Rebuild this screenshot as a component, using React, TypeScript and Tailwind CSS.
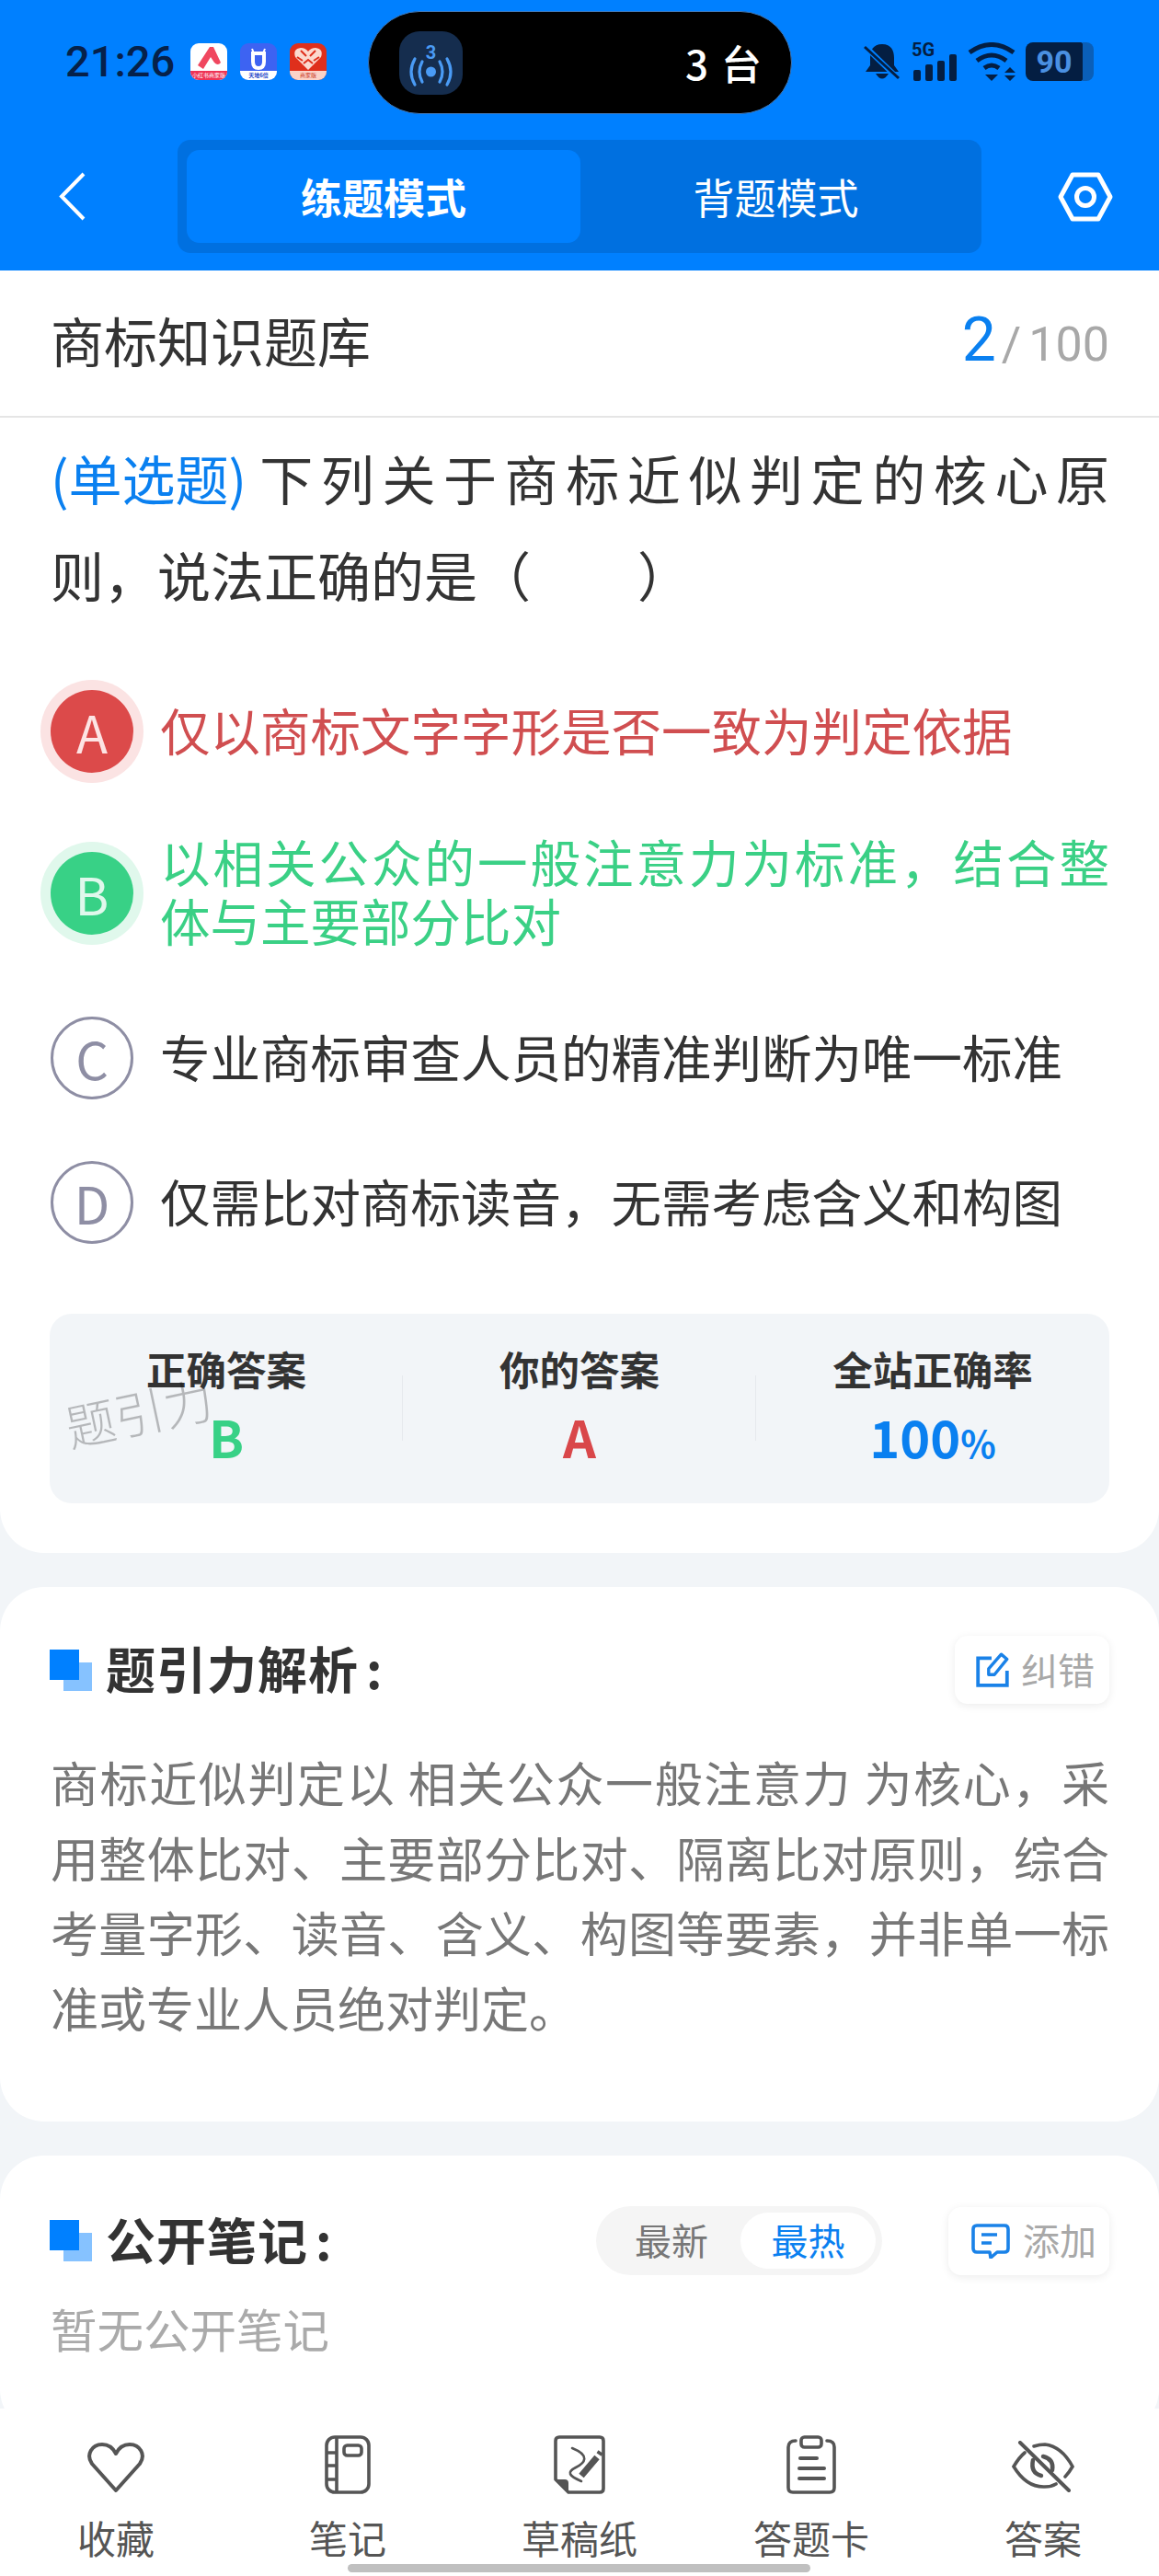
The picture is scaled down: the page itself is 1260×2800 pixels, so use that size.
import type { ReactNode } from 'react';

// Small square notification icon from the status bar
function AppBadge({ children, label, bg, labelClass }: { children: ReactNode; label: string; bg: string; labelClass: string }) {
  return (
    <div className={`relative w-[40px] h-[40px] rounded-[9px] overflow-hidden ${bg}`}>
      {children}
      <div className={`absolute bottom-0 inset-x-0 h-[10px] leading-[10px] text-[6px] text-center whitespace-nowrap ${labelClass}`}>{label}</div>
    </div>
  );
}

function StatusBar() {
  return (
    <div className="flex items-start h-[138px] pt-[12px]">
      <div className="flex items-center h-[112px] pl-[71px] w-[400px]">
        <span className="text-[47px] font-medium text-[#06214a] w-[136px] font-['Roboto',sans-serif] -mt-[2px]">21:26</span>
        <div className="flex gap-[14px] -mt-[2px]">
          <AppBadge label="小红书商家版" bg="bg-white" labelClass="bg-[#ee3355] text-white">
            <svg viewBox="0 0 40 40" className="w-[40px] h-[40px]">
              <path d="M8 24 L21 4 L25 4 L33 21 Q30 25 26 21 L22 15 L14 28 Z" fill="#f0475f" />
            </svg>
          </AppBadge>
          <AppBadge label="天地6倍" bg="bg-[#3d63f2]" labelClass="bg-white text-[#2747c8] font-bold">
            <svg viewBox="0 0 40 40" className="w-[40px] h-[40px]">
              <path d="M13 6 L15 11 H25 L27 6" stroke="#fff" strokeWidth="2" fill="none" />
              <path d="M14 11 H26 V20 Q26 27 20 27 Q14 27 14 20 Z" stroke="#fff" strokeWidth="4" fill="none" />
            </svg>
          </AppBadge>
          <AppBadge label="商家版" bg="bg-[#df2f1c]" labelClass="bg-[#fbd3c8] text-[#c9331e]">
            <svg viewBox="0 0 40 40" className="w-[40px] h-[40px]">
              <path d="M20 29 L6 15 Q3 6 12 5 Q17 5 20 9 Q23 5 28 5 Q37 6 34 15 Z" fill="#fbd9cf" />
              <path d="M12 8 L18 14 M28 8 L22 14 M8 15 L14 19 M32 15 L26 19 M15 22 L20 18 L25 22" stroke="#df2f1c" strokeWidth="2" fill="none" />
            </svg>
          </AppBadge>
        </div>
      </div>

      <div className="flex items-center w-[461px] h-[112px] rounded-full bg-black border border-[#3f78b8] pl-[33px] pr-[30px] justify-between">
        <div className="w-[69px] h-[69px] rounded-[22px] bg-[#152d4e] flex items-center justify-center">
          <svg viewBox="0 0 69 69" className="w-[69px] h-[69px]">
            <text x="34.5" y="30" textAnchor="middle" fontSize="20" fontWeight="700" fill="#4a9bf5" fontFamily="Roboto, sans-serif">3</text>
            <circle cx="34.5" cy="44" r="5.5" fill="#4a9bf5" />
            <g fill="none" stroke="#4a9bf5" strokeWidth="3.2" strokeLinecap="round">
              <path d="M25 33 Q19 44 25 55" />
              <path d="M44 33 Q50 44 44 55" />
              <path d="M17 30 Q9 44 17 58" />
              <path d="M52 30 Q60 44 52 58" />
            </g>
          </svg>
        </div>
        <span className="text-[44px] font-medium text-white tracking-[2px]">3 台</span>
      </div>

      <div className="flex items-center h-[112px] pl-[78px] -mt-[1px]">
        <svg viewBox="0 0 40 42" className="w-[40px] h-[42px]">
          <path d="M20 2 C10 2 7 9 7 17 V25 L2 32 H38 L33 25 V17 C33 9 30 2 20 2 Z" fill="#041e42" />
          <path d="M13 34 Q20 45 27 34 Z" fill="#041e42" />
          <path d="M2 5 L38 40" stroke="#0080ff" strokeWidth="6" />
          <path d="M1 5 L38 39" stroke="#041e42" strokeWidth="3" />
        </svg>
        <div className="relative w-[50px] h-[42px] ml-[12px]">
          <span className="absolute left-0 -top-[6px] text-[20px] leading-[28px] font-bold text-[#041e42] font-['Roboto',sans-serif]">5G</span>
          <div className="absolute bottom-0 left-[2px] flex items-end gap-[5px]">
            <div className="w-[8px] h-[12px] rounded-[2px] bg-[#041e42]" />
            <div className="w-[8px] h-[18px] rounded-[2px] bg-[#041e42]" />
            <div className="w-[8px] h-[22px] rounded-[2px] bg-[#041e42]" />
            <div className="w-[8px] h-[29px] rounded-[2px] bg-[#041e42]" />
          </div>
        </div>
        <svg viewBox="0 0 54 42" className="w-[54px] h-[42px] ml-[11px]">
          <g fill="none" stroke="#041e42" strokeWidth="5">
            <path d="M2 11 Q26 -6 50 11" />
            <path d="M10 20 Q26 8 42 20" />
            <path d="M18 28 Q26 22 34 28" />
          </g>
          <path d="M19 35 H33 L26 42 Z" fill="#041e42" />
          <path d="M40 33 L46 27 L52 33 Z M40 36 H52 L46 42 Z" fill="#041e42" />
        </svg>
        <div className="flex items-center ml-[9px]">
          <div className="w-[62px] h-[42px] rounded-l-[8px] rounded-r-[2px] bg-[#041e42] flex items-center justify-center text-[34px] font-bold text-[#4a90e2] font-['Roboto',sans-serif] leading-none">90</div>
          <div className="w-[12px] h-[42px] bg-[#0a5fb8] rounded-r-[8px]" />
        </div>
      </div>
    </div>
  );
}

function Header() {
  return (
    <header className="h-[294px] bg-[#0080ff] shrink-0">
      <StatusBar />
      <div className="flex items-center h-[123px] mt-[14px]">
        <div className="w-[193px] pl-[64px]">
          <svg viewBox="0 0 29 53" className="w-[29px] h-[53px]">
            <path d="M27 2 L3 26.5 L27 51" fill="none" stroke="#fff" strokeWidth="4" />
          </svg>
        </div>
        <div className="flex w-[874px] h-[123px] rounded-[14px] bg-[#0070e0] p-[11px]">
          <div className="w-[428px] rounded-[14px] bg-[#0080ff] flex items-center justify-center text-[45px] font-bold text-white -ml-px">练题模式</div>
          <div className="flex-1 flex items-center justify-center text-[45px] text-white">背题模式</div>
        </div>
        <div className="pl-[83px]">
          <svg viewBox="0 0 60 54" className="w-[60px] h-[54px]">
            <path d="M16 3 H44 L57 27 L44 51 H16 L3 27 Z" fill="none" stroke="#fff" strokeWidth="5" strokeLinejoin="round" />
            <circle cx="30" cy="27" r="9.5" fill="none" stroke="#fff" strokeWidth="5" />
          </svg>
        </div>
      </div>
    </header>
  );
}

type OptionState = 'wrong' | 'right' | 'idle';

function OptionRow({ letter, text, state, className }: { letter: string; text: string; state: OptionState; className: string }) {
  const circle =
    state === 'wrong'
      ? 'bg-[#dc4a4a] ring-[11px] ring-[#fbe3e3] text-[#fde4e4]'
      : state === 'right'
        ? 'bg-[#38d186] ring-[11px] ring-[#e0f8ec] text-[#e0f8ec]'
        : 'border-[3px] border-[#8e8ea4] text-[#8e8ea4]';
  const label = state === 'wrong' ? 'text-[#d04e50]' : state === 'right' ? 'text-[#3ad085]' : 'text-[#333333]';

  return (
    <div className={`flex items-center ${className}`}>
      <div className={`w-[90px] h-[90px] shrink-0 ml-[1px] mr-[29px] rounded-full flex items-center justify-center text-[56px] font-normal ${circle}`}>
        {letter}
      </div>
      <p className={`flex-1 text-[54.5px] leading-[64px] text-justify pb-[5px] ${label}`}>{text}</p>
    </div>
  );
}

function SectionIcon() {
  return (
    <div className="relative w-[46px] h-[45px] shrink-0">
      <div className="absolute right-0 bottom-0 w-[31px] h-[31px] bg-[#86c2ff]" />
      <div className="absolute left-0 top-0 w-[32px] h-[33px] bg-[#0080ff]" />
    </div>
  );
}

function Stat({ label, children, divider }: { label: string; children: ReactNode; divider?: boolean }) {
  return (
    <div className="relative flex-1 flex flex-col items-center">
      {divider && <div className="absolute -left-px top-[67px] h-[71px] w-px bg-[#e6e9ed]" />}
      <div className="mt-[35px] text-[43.5px] leading-[50px] font-bold text-[#333333]">{label}</div>
      <div className="mt-[16px] text-[56px] leading-[64px] font-bold">{children}</div>
    </div>
  );
}

function NavItem({ label, children }: { label: string; children: ReactNode }) {
  return (
    <div className="flex flex-col items-center">
      <div className="h-[64px] flex items-center justify-center">{children}</div>
      <div className="mt-[22px] text-[42px] leading-[50px] text-[#555555]">{label}</div>
    </div>
  );
}

function BottomNav() {
  return (
    <nav className="relative h-[182px] shrink-0 bg-white pt-[29px] grid grid-cols-5">
      <NavItem label="收藏">
        <svg viewBox="0 0 64 56" className="w-[64px] h-[56px] mt-[6px]">
          <path d="M32 53 L6 24 C-1 14 6 3 17 3 C24 3 29 7 32 13 C35 7 40 3 47 3 C58 3 65 14 58 24 Z" fill="none" stroke="#555" strokeWidth="4" strokeLinejoin="round" />
        </svg>
      </NavItem>
      <NavItem label="笔记">
        <svg viewBox="0 0 50 64" className="w-[50px] h-[64px]">
          <g fill="none" stroke="#555" strokeWidth="3.6">
            <rect x="2" y="2" width="46" height="60" rx="9" />
            <path d="M13 2 V62 M2 19 H13 M2 33 H13 M2 48 H13" />
            <rect x="21" y="11" width="19" height="11" rx="3.5" />
          </g>
        </svg>
      </NavItem>
      <NavItem label="草稿纸">
        <svg viewBox="0 0 56 64" className="w-[56px] h-[64px]">
          <path d="M16 62 H50 Q54 62 54 58 V6 Q54 2 50 2 H6 Q2 2 2 6 V48 Z" fill="none" stroke="#555" strokeWidth="3.6" strokeLinejoin="round" />
          <path d="M2 48 H12 Q16 48 16 52 V62 Z" fill="#555" />
          <path d="M20 14 C40 22 34 30 24 35 C14 40 16 44 30 50" fill="none" stroke="#555" strokeWidth="2.6" strokeLinecap="round" />
          <path d="M30 44 L47 24" stroke="#555" strokeWidth="7" />
          <path d="M49 21 L51 18" stroke="#555" strokeWidth="6" />
        </svg>
      </NavItem>
      <NavItem label="答题卡">
        <svg viewBox="0 0 54 64" className="w-[54px] h-[64px]">
          <g fill="none" stroke="#555" strokeWidth="3.6" strokeLinecap="round">
            <path d="M10 6 Q2 6 2 13 V57 Q2 62 7 62 H47 Q52 62 52 57 V13 Q52 6 44 6" />
            <rect x="16" y="2" width="22" height="11" rx="3.5" />
            <path d="M15 25 H33" strokeWidth="4" />
            <path d="M14 36 H41" strokeWidth="4" />
            <path d="M14 47 H41" strokeWidth="4" />
          </g>
        </svg>
      </NavItem>
      <NavItem label="答案">
        <svg viewBox="0 0 68 56" className="w-[68px] h-[56px] mt-[3px]">
          <g fill="none" stroke="#555" strokeWidth="3.6" strokeLinecap="round">
            <path d="M14 13 Q8 18 2 28 Q16 51 36 50 Q43 50 48 47" />
            <path d="M24 6 Q30 4 36 4 Q54 6 66 28 Q62 35 58 39" />
            <path d="M23 21 Q20 35 32 38" strokeWidth="4.5" />
            <path d="M34 17 Q46 20 44 32" strokeWidth="4.5" />
            <path d="M9 2 L62 54" strokeWidth="4" />
          </g>
        </svg>
      </NavItem>
      <div className="absolute left-[378px] bottom-[4px] w-[503px] h-[9px] rounded-full bg-[#c0c0c0]" />
    </nav>
  );
}

export default function App() {
  return (
    <div className="w-[1260px] h-[2800px] overflow-hidden flex flex-col bg-[#f2f5f8] font-['Noto_Sans_CJK_SC','Noto_Sans',sans-serif]">
      <Header />

      <main className="flex-1 overflow-hidden">
        {/* Question card */}
        <section className="bg-white rounded-b-[48px] pb-[54px]">
          <div className="h-[160px] px-[54px] flex items-center justify-between border-b-2 border-[#e5e5e5]">
            <span className="ml-px mb-[7px] text-[58px] text-[#333333]">商标知识题库</span>
            <span className="flex items-baseline mb-[7px] font-['Roboto',sans-serif]">
              <span className="text-[66px] text-[#0a80f0]">2</span>
              <span className="text-[52px] text-[#a8a8a8] ml-[6px]">/</span>
              <span className="text-[52px] text-[#a8a8a8] ml-[8px]">100</span>
            </span>
          </div>

          <div className="px-[54px] pt-[13px]">
            {/* First line stretches to the right edge, the blue tag keeps its natural spacing */}
            <div className="flex gap-[14px] text-[58px] leading-[105px] text-[#333333] ml-px">
              <span className="shrink-0 text-[#0a80f0]">(单选题)</span>
              <span className="flex-1 text-justify [text-align-last:justify]">下列关于商标近似判定的核心原</span>
            </div>
            <p className="text-[58px] leading-[105px] text-[#333333] ml-px">则，说法正确的是（　　）</p>

            <OptionRow className="mt-[73px]" letter="A" state="wrong" text="仅以商标文字字形是否一致为判定依据" />
            <OptionRow className="mt-[64px]" letter="B" state="right" text="以相关公众的一般注意力为标准，结合整体与主要部分比对" />
            <OptionRow className="mt-[68px]" letter="C" state="idle" text="专业商标审查人员的精准判断为唯一标准" />
            <OptionRow className="mt-[67px]" letter="D" state="idle" text="仅需比对商标读音，无需考虑含义和构图" />

            <div className="relative mt-[76px] h-[206px] rounded-[24px] bg-[#f2f5f8] flex">
              <Stat label="正确答案">
                <span className="text-[#38d186]">B</span>
              </Stat>
              <Stat label="你的答案" divider>
                <span className="text-[#d9474a]">A</span>
              </Stat>
              <Stat label="全站正确率" divider>
                <span className="text-[#0a80f0]">
                  100<span className="text-[40px]">%</span>
                </span>
              </Stat>
              {/* Watermark */}
              <div className="absolute left-[16px] top-[76px] -rotate-[12deg] text-[54px] leading-[60px] font-light text-black/25 whitespace-nowrap">题引力</div>
            </div>
          </div>
        </section>

        {/* Analysis card */}
        <section className="mt-[37px] bg-white rounded-[48px] px-[54px] pt-[53px] pb-[82px]">
          <div className="flex items-center justify-between h-[74px]">
            <div className="flex items-center gap-[15px]">
              <SectionIcon />
              <span className="mb-[5px] text-[54px] font-bold text-[#333333] tracking-[1px]">
                题引力解析<span className="ml-[8px]">:</span>
              </span>
            </div>
            <div className="flex items-center w-[168px] h-[74px] rounded-[14px] bg-white shadow-[0_2px_10px_rgba(0,0,0,0.08)] pl-[22px]">
              <svg viewBox="0 0 36 38" className="w-[38px] h-[40px]">
                <path d="M17 7 H3 V35 H33 V20" fill="none" stroke="#1a82e8" strokeWidth="3.6" />
                <path d="M14 24 V18 L27 3 L33 8 L20 24 Z" fill="none" stroke="#1a82e8" strokeWidth="3.2" strokeLinejoin="round" />
              </svg>
              <span className="ml-[12px] mb-[3px] text-[40px] text-[#a8a8a8] whitespace-nowrap">纠错</span>
            </div>
          </div>
          <p className="mt-[44px] mb-[2px] ml-px text-[52px] leading-[81.5px] text-[#777777] text-justify">
            商标近似判定以 相关公众一般注意力 为核心，采用整体比对、主要部分比对、隔离比对原则，综合考量字形、读音、含义、构图等要素，并非单一标准或专业人员绝对判定。
          </p>
        </section>

        {/* Public notes card */}
        <section className="mt-[37px] h-[302px] bg-white rounded-[48px] px-[54px] pt-[55px]">
          <div className="flex items-center h-[75px]">
            <SectionIcon />
            <span className="ml-[15px] mb-[5px] text-[54px] font-bold text-[#333333] tracking-[1px]">
              公开笔记<span className="ml-[8px]">:</span>
            </span>
            <div className="ml-auto flex items-center w-[311px] h-[75px] rounded-full bg-[#f5f5f5] pl-[7px]">
              <span className="w-[150px] mb-[3px] text-center text-[40px] text-[#777777]">最新</span>
              <span className="w-[147px] h-[61px] rounded-full bg-white flex items-center justify-center pb-[3px] text-[40px] text-[#0a80f0]">最热</span>
            </div>
            <div className="ml-[72px] flex items-center w-[175px] h-[74px] shrink-0 rounded-[14px] bg-white shadow-[0_2px_10px_rgba(0,0,0,0.08)] pl-[25px]">
              <svg viewBox="0 0 42 38" className="w-[42px] h-[38px]">
                <path d="M6 2 H36 Q40 2 40 6 V27 Q40 31 36 31 H28 L21 37 L20 31 H6 Q2 31 2 27 V6 Q2 2 6 2 Z" fill="none" stroke="#1a82e8" strokeWidth="3.6" strokeLinejoin="round" />
                <path d="M11 12 H28 M11 21 H22" stroke="#1a82e8" strokeWidth="3.6" />
              </svg>
              <span className="ml-[14px] mb-[3px] text-[40px] text-[#a8a8a8] whitespace-nowrap">添加</span>
            </div>
          </div>
          <p className="mt-[22px] ml-px text-[50.5px] leading-[70px] text-[#aaaaaa]">暂无公开笔记</p>
        </section>
      </main>

      <BottomNav />
    </div>
  );
}
